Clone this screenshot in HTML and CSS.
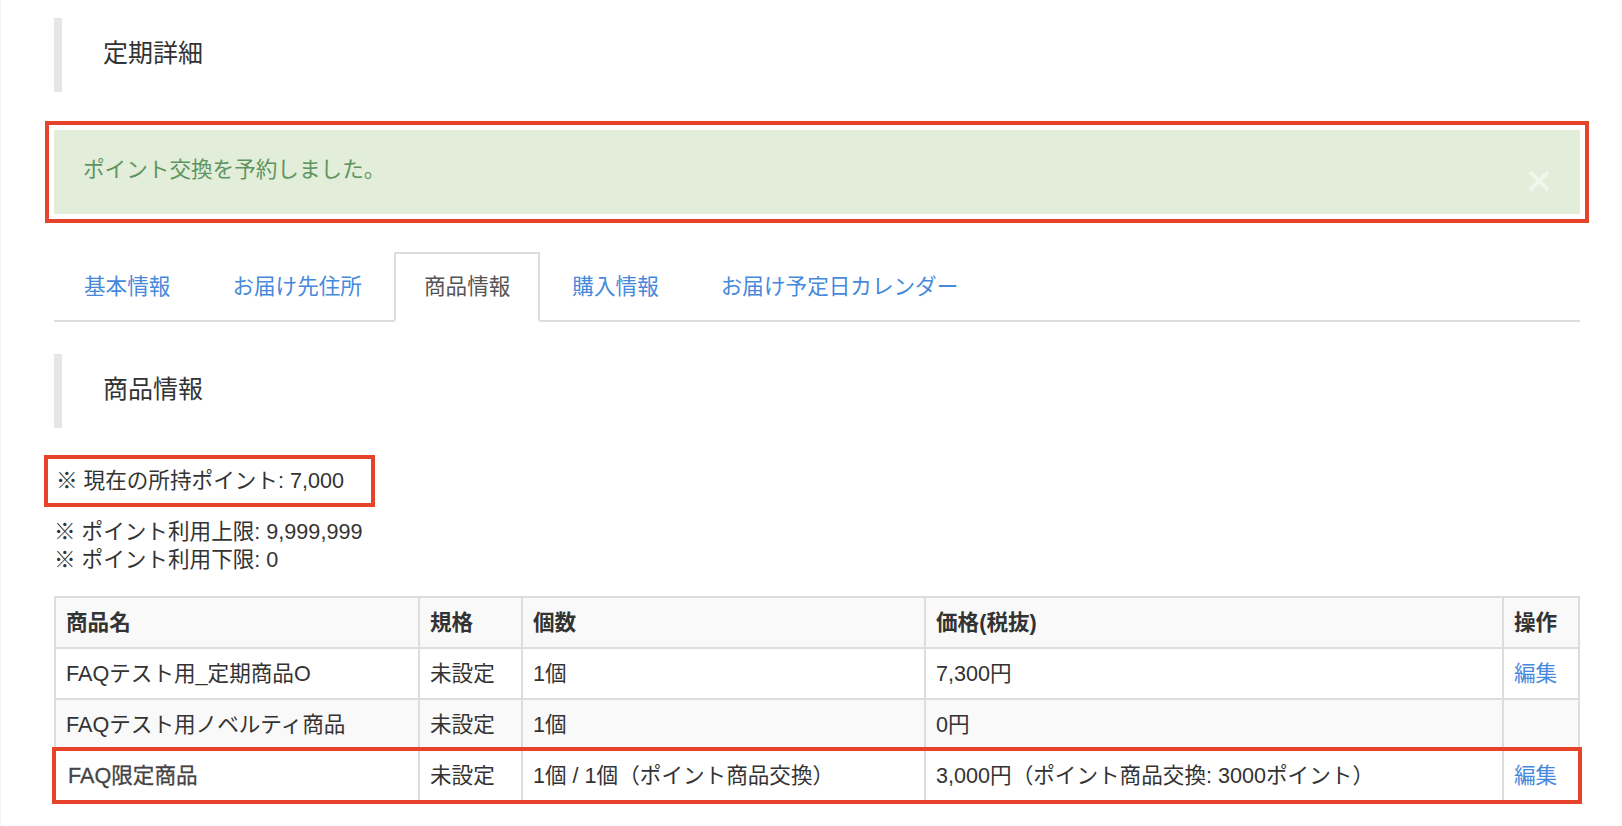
FILE: index.html
```html
<!DOCTYPE html>
<html lang="ja">

<head>
    <meta charset="UTF-8">
    <meta name="viewport" content="width=device-width, initial-scale=1.0">
    <title>定期詳細</title>

    <link rel="stylesheet" href="styles.css">
</head>

<body>
    <div class="page">
        <h2 class="page-title">定期詳細</h2>

        <div class="alert mark">
            ポイント交換を予約しました。
            <span class="alert-close">
                <svg width="22" height="22" viewBox="0 0 22 22">
                    <path d="M2 2 L20 20 M20 2 L2 20" stroke="#fff" stroke-width="4" fill="none" />
                </svg>
            </span>
        </div>

        <ul class="tabs">
            <li><a href="#">基本情報</a></li>
            <li><a href="#">お届け先住所</a></li>
            <li class="active"><a href="#">商品情報</a></li>
            <li><a href="#">購入情報</a></li>
            <li><a href="#">お届け予定日カレンダー</a></li>
        </ul>

        <h3 class="page-title sub">商品情報</h3>

        <p class="point-now">※ 現在の所持ポイント: 7,000</p>
        <p class="point-line">※ ポイント利用上限: 9,999,999</p>
        <p class="point-line">※ ポイント利用下限: 0</p>

        <table class="items">
            <thead>
                <tr>
                    <th class="col-name">商品名</th>
                    <th class="col-spec">規格</th>
                    <th class="col-qty">個数</th>
                    <th class="col-price">価格(税抜)</th>
                    <th>操作</th>
                </tr>
            </thead>
            <tbody>
                <tr>
                    <td>FAQテスト用_定期商品O</td>
                    <td>未設定</td>
                    <td>1個</td>
                    <td>7,300円</td>
                    <td><a href="#">編集</a></td>
                </tr>
                <tr class="stripe">
                    <td>FAQテスト用ノベルティ商品</td>
                    <td>未設定</td>
                    <td>1個</td>
                    <td>0円</td>
                    <td></td>
                </tr>
                <tr class="row-mark">
                    <td class="name-strong">FAQ限定商品</td>
                    <td>未設定</td>
                    <td>1個 / 1個（ポイント商品交換）</td>
                    <td>3,000円（ポイント商品交換: 3000ポイント）</td>
                    <td><a href="#">編集</a></td>
                </tr>
            </tbody>
        </table>
    </div>
</body>

</html>
```

FILE: styles.css
```css
* {
    margin: 0;
    padding: 0;
    box-sizing: border-box;
}

ul,
li {
    list-style: none;
}

a {
    color: #4689dc;
    text-decoration: none;
}

body {
    font-family: "Liberation Sans", "Noto Sans CJK JP", sans-serif;
    font-size: 21.6px;
    color: #333;
    background-color: #fff;
}

.page {
    min-height: 100vh;
    border-left: 1px solid #f3f3f3;
    padding: 18px 42px 20px 53px;
}

/* 見出し */
.page-title {
    font-size: 25px;
    font-weight: normal;
    line-height: 30px;
    color: #333;
    border-left: 8px solid #e6e6e6;
    padding: 20px 0 24px 41px;
}

.page-title.sub {
    margin-top: 32px;
}

/* 完了メッセージ */
.alert {
    position: relative;
    margin-top: 38px;
    background-color: #e2eed9;
    color: #5e9460;
    line-height: 30px;
    padding: 25px 29px 29px;
}

.alert-close {
    position: absolute;
    top: 40px;
    right: 30px;
    opacity: 0.5;
    display: flex;
}

.mark {
    outline: 4px solid #e5432a;
    outline-offset: 5px;
}

/* タブ */
.tabs {
    display: flex;
    margin-top: 38px;
    border-bottom: 2px solid #ddd;
}

.tabs>li {
    margin-right: 2px;
    margin-bottom: -2px;
}

.tabs>li>a {
    display: block;
    line-height: 30px;
    padding: 18px 28px;
    border: 2px solid transparent;
}

.tabs>li.active>a {
    color: #555;
    background-color: #fff;
    border-color: #ddd #ddd transparent;
}

/* ポイント */
.point-now {
    display: inline-block;
    margin-top: 27px;
    margin-left: -10px;
    line-height: 28px;
    padding: 8px 27px 8px 8px;
    border: 4px solid #e5432a;
}

.point-now+.point-line {
    margin-top: 11px;
}

.point-line {
    line-height: 28px;
}

/* 商品テーブル */
.items {
    width: 100%;
    margin-top: 22px;
    border-collapse: collapse;
}

.items th,
.items td {
    border: 2px solid #ddd;
    padding: 10px 10px;
    line-height: 29px;
    text-align: left;
    vertical-align: middle;
}

.items th {
    font-weight: bold;
    background-color: #f9f9f9;
}

.items .col-name {
    width: 364px;
}

.items .col-spec {
    width: 103px;
}

.items .col-qty {
    width: 403px;
}

.items .col-price {
    width: 578px;
}

.items tr.stripe td {
    background-color: #f9f9f9;
}

.items tr.row-mark {
    outline: 4px solid #e5432a;
    outline-offset: -1px;
}

.items .name-strong {
    padding-left: 12px;
    color: #444;
    -webkit-text-stroke: 0.3px #444;
}
```
